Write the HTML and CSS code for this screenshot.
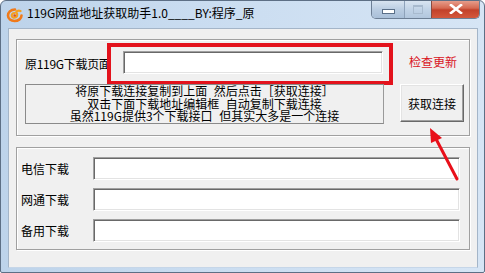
FILE: index.html
```html
<!DOCTYPE html>
<html lang="zh-CN">
<head>
<meta charset="utf-8">
<title>119G网盘地址获取助手1.0</title>
<link rel="stylesheet" href="styles.css">
</head>
<body>
<div class="window">
  <div class="titlebar">
    <svg class="app-icon" width="18" height="16" viewBox="0 0 18 16">
      <path d="M9 2.5 C4.5 2.5 2 5.5 2 8.5 C2 12 5 14 8.5 14 C12.5 14 15.5 11.5 15.5 8.5" fill="none" stroke="#f07a1a" stroke-width="2.6" stroke-linecap="round"/>
      <path d="M8.5 6 C6.5 6 5.5 7.5 5.8 9 C6.2 10.8 8.5 11.2 10 10.2 C11.5 9.2 11.5 7 10.5 5.8 C9.5 4.6 12 3 14.5 4" fill="none" stroke="#f5a020" stroke-width="2.2" stroke-linecap="round"/>
      <circle cx="8.7" cy="8.5" r="1.3" fill="#e2501a"/>
    </svg>
    <span class="title">119G网盘地址获取助手1.0____BY:程序_原</span>
    <div class="caption-buttons">
      <div class="cap-btn cap-min"><span class="min-glyph"></span></div>
      <div class="cap-btn cap-max"><span class="max-glyph"></span></div>
      <div class="cap-btn cap-close">
        <svg width="14" height="10" viewBox="0 0 14 10"><path d="M2 1 L12 9 M12 1 L2 9" stroke="#fff" stroke-width="2.6" stroke-linecap="square"/></svg>
      </div>
    </div>
  </div>
  <div class="client">
    <div class="group group-top">
      <div class="row-page">
        <span class="label label-page">原119G下载页面</span>
        <div class="highlight">
          <div class="textbox textbox-page"></div>
        </div>
        <span class="update-link">检查更新</span>
      </div>
      <div class="row-info">
        <div class="info">
          <div class="info-line">将原下载连接复制到上面 然后点击［获取连接］</div>
          <div class="info-line">双击下面下载地址编辑框 自动复制下载连接</div>
          <div class="info-line">虽然119G提供3个下载接口 但其实大多是一个连接</div>
        </div>
        <div class="button">获取连接</div>
      </div>
    </div>
    <div class="group group-bottom">
      <div class="dl-row"><span class="label dl-label">电信下载</span><div class="textbox textbox-dl"></div></div>
      <div class="dl-row"><span class="label dl-label">网通下载</span><div class="textbox textbox-dl"></div></div>
      <div class="dl-row"><span class="label dl-label">备用下载</span><div class="textbox textbox-dl"></div></div>
    </div>
  </div>
  <svg class="arrow" width="40" height="60" viewBox="0 0 40 60">
    <line x1="32" y1="53" x2="10" y2="11" stroke="#e8101a" stroke-width="3" stroke-linecap="round"/>
    <polygon points="5,2 17,12 6,17" fill="#e8101a"/>
  </svg>
</div>
</body>
</html>
```
FILE: styles.css
```css
html, body {
  margin: 0;
  padding: 0;
  background: #ffffff;
}

body {
  font-family: "Noto Sans CJK SC", "Noto Sans", sans-serif;
  font-size: 12px;
  color: #000;
}

.window {
  position: relative;
  width: 485px;
  height: 273px;
  box-sizing: border-box;
  border: 1px solid #5d6f85;
  border-radius: 6px 6px 2px 2px;
  background: linear-gradient(to right, #bdd3ea 0%, #c9dcf0 40%, #d6e5f5 100%);
  display: flex;
  flex-direction: column;
  overflow: hidden;
}

.titlebar {
  height: 27px;
  display: flex;
  align-items: flex-start;
  flex-shrink: 0;
}

.app-icon {
  margin: 6px 0 0 5px;
}

.title {
  margin: 4px 0 0 3px;
  font-size: 12px;
  line-height: 16px;
  white-space: nowrap;
  color: #000;
}

.caption-buttons {
  margin-left: auto;
  margin-right: 4px;
  display: flex;
  height: 18px;
  margin-top: -1px;
  border: 1px solid #6d7f95;
  border-top: none;
  border-radius: 0 0 5px 5px;
  overflow: hidden;
}

.cap-btn {
  height: 18px;
  display: flex;
  align-items: center;
  justify-content: center;
}

.cap-min {
  width: 32px;
  background: linear-gradient(#dbe6f2, #b9cce1 55%, #a9bfd8);
  border-right: 1px solid #8ea2ba;
}

.min-glyph {
  width: 11px;
  height: 3px;
  margin-top: 5px;
  background: #fff;
  border: 1px solid #5a6f88;
}

.cap-max {
  width: 26px;
  background: linear-gradient(#dbe6f2, #c0d2e6 55%, #b2c6dd);
  border-right: 1px solid #8a4a40;
}

.max-glyph {
  width: 8px;
  height: 6px;
  border: 1px solid #a8bace;
  border-top-width: 2px;
}

.cap-close {
  width: 47px;
  background: linear-gradient(#e8a493, #d66a52 45%, #c2412a 55%, #d4583d);
}

.client {
  margin: 0 6px 4px 7px;
  flex: 1;
  background: #f0f0f0;
  border: 1px solid #a4b5c8;
  border-bottom-color: #c6d6e8;
  padding: 10px 0 0 7px;
  display: flex;
  flex-direction: column;
  gap: 11px;
}

.group {
  width: 454px;
  box-sizing: border-box;
  border: 1px solid #a0a0a0;
  box-shadow: inset 1px 1px #ffffff, 1px 1px #ffffff;
}

.group-top {
  height: 97px;
  padding: 3px 0 0 8px;
  display: flex;
  flex-direction: column;
}

.row-page {
  display: flex;
  align-items: center;
  height: 42px;
}

.label {
  font-size: 12px;
  line-height: 14px;
  white-space: nowrap;
}

.label-page {
  width: 82px;
  letter-spacing: -0.3px;
}

.highlight {
  width: 286px;
  height: 42px;
  box-sizing: border-box;
  border: 4px solid #e3121c;
  padding: 4px 6px 0 12px;
}

.textbox {
  box-sizing: border-box;
  background: #ffffff;
  border: 1px solid;
  border-color: #a0a0a0 #ffffff #ffffff #a0a0a0;
  box-shadow: inset 1px 1px #696969, inset -1px -1px #e3e3e3;
}

.textbox-page {
  width: 260px;
  height: 23px;
}

.update-link {
  margin-left: 16px;
  margin-top: -4px;
  color: #d9141e;
  font-size: 12px;
  line-height: 14px;
}

.row-info {
  display: flex;
  align-items: flex-start;
}

.info {
  width: 359px;
  height: 40px;
  box-sizing: border-box;
  border: 1px solid #8a8a8a;
  border-right-color: #9a9a9a;
  text-align: center;
  margin-top: -1px;
  padding-top: 0;
  display: flex;
  flex-direction: column;
}

.info-line {
  font-size: 12px;
  line-height: 12.6px;
  height: 12.6px;
  white-space: nowrap;
  word-spacing: 4px;
  letter-spacing: 0;
}

.button {
  margin-left: 16px;
  width: 64px;
  height: 38px;
  box-sizing: border-box;
  border: 1px solid;
  border-color: #ffffff #696969 #696969 #ffffff;
  box-shadow: inset -1px -1px #a0a0a0, inset 1px 1px #e3e3e3;
  background: #f0f0f0;
  display: flex;
  align-items: center;
  justify-content: center;
  font-size: 12px;
  margin-top: -1px;
}

.group-bottom {
  height: 103px;
  padding: 9px 0 0 4px;
  display: flex;
  flex-direction: column;
  gap: 8px;
}

.dl-row {
  display: flex;
  align-items: center;
  height: 23px;
}

.dl-label {
  width: 72px;
}

.textbox-dl {
  width: 367px;
  height: 23px;
}

.arrow {
  position: absolute;
  left: 424px;
  top: 125px;
}
```
